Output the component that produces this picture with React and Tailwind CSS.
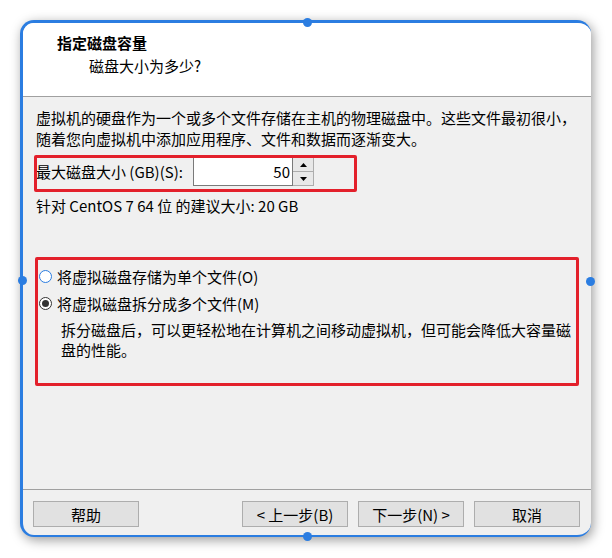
import React from 'react';

const font = { fontFamily: '"Noto Sans CJK SC", "Noto Sans", sans-serif' };

function Handle({ className }) {
  return <div className={`absolute w-[9px] h-[9px] rounded-full bg-[#2b7de1] ${className}`} />;
}

function WinButton({ children }) {
  return (
    <button className="w-[106px] h-[26px] bg-[#e1e1e1] border border-[#adadad] text-[15px] leading-none text-black flex items-center justify-center">
      {children}
    </button>
  );
}

function Radio({ checked, hover }) {
  return (
    <span
      className={`ml-[3px] w-[13px] h-[13px] rounded-full bg-white border flex items-center justify-center shrink-0 ${
        hover ? 'border-[#2b7de1]' : 'border-[#333333]'
      }`}
    >
      {checked && <span className="w-[7px] h-[7px] rounded-full bg-[#333333]" />}
    </span>
  );
}

export default function App() {
  return (
    <div className="w-[612px] h-[558px] bg-white pt-[20px] pl-[20px] text-black" style={font}>
      <div className="relative w-[571px] h-[517px]">
        <div className="w-full h-full flex flex-col rounded-[14px] overflow-hidden border-t-[3px] border-l-[3px] border-b-[2px] border-r-0 border-t-[#2b7de1] border-l-[#2b7de1] border-b-[#2b7de1] bg-[#f0f0f0] shadow-[2px_3px_12px_rgba(0,0,0,0.4)]">
          {/* header */}
          <div className="h-[74px] shrink-0 bg-white border-b border-[#a0a0a0] pt-[9px]">
            <div className="pl-[34px] text-[15px] leading-[21px] font-bold">指定磁盘容量</div>
            <div className="pl-[66px] mt-[2px] text-[15px] leading-[21px]">磁盘大小为多少?</div>
          </div>

          {/* body */}
          <div className="flex-1 pl-[13px] pt-[10px] text-[15px]">
            <p className="leading-[21px]">
              虚拟机的硬盘作为一个或多个文件存储在主机的物理磁盘中。这些文件最初很小，
              <br />
              随着您向虚拟机中添加应用程序、文件和数据而逐渐变大。
            </p>

            <div className="relative mt-[8px] flex items-center h-[29px]">
              <span className="w-[157px] shrink-0 leading-[21px]">最大磁盘大小 (GB)(S):</span>
              <div className="flex h-[29px]">
                <div className="w-[100px] h-full bg-white border border-[#7a7a7a] flex items-center justify-end pr-[2px] leading-none">
                  50
                </div>
                <div className="w-[21px] h-full flex flex-col">
                  <div className="flex-1 bg-[#e8e8e8] border border-[#adadad] border-l-0 flex items-center justify-center">
                    <svg width="7" height="4" viewBox="0 0 7 4"><path d="M0 4 L3.5 0 L7 4 Z" fill="#000" /></svg>
                  </div>
                  <div className="flex-1 bg-[#e8e8e8] border border-[#adadad] border-l-0 border-t-0 flex items-center justify-center">
                    <svg width="7" height="4" viewBox="0 0 7 4"><path d="M0 0 L3.5 4 L7 0 Z" fill="#000" /></svg>
                  </div>
                </div>
              </div>
              <div className="absolute left-[-2px] top-[-2px] w-[323px] h-[37px] border-[3px] border-[#e3202b] rounded-[2px] pointer-events-none" />
            </div>

            <div className="mt-[9px] leading-[21px]">针对 CentOS 7 64 位 的建议大小: 20 GB</div>

            <div className="relative mt-[50px]">
              <div className="flex items-center gap-[5px] h-[21px]">
                <Radio hover />
                <span className="leading-[21px]">将虚拟磁盘存储为单个文件(O)</span>
              </div>
              <div className="flex items-center gap-[5px] h-[21px] mt-[6px]">
                <Radio checked />
                <span className="leading-[21px]">将虚拟磁盘拆分成多个文件(M)</span>
              </div>
              <p className="pl-[25px] mt-[6px] leading-[20px]">
                拆分磁盘后，可以更轻松地在计算机之间移动虚拟机，但可能会降低大容量磁
                <br />
                盘的性能。
              </p>
              <div className="absolute left-[-1px] top-[-9px] w-[544px] h-[129px] border-[3px] border-[#e3202b] rounded-[2px] pointer-events-none" />
            </div>
          </div>

          {/* footer */}
          <div className="shrink-0 border-t border-[#a0a0a0] pt-[11px] pb-[8px] pl-[10px] pr-[11px] flex items-center">
            <WinButton>帮助</WinButton>
            <div className="ml-auto flex gap-[10px]">
              <WinButton>&lt; 上一步(B)</WinButton>
              <WinButton>下一步(N) &gt;</WinButton>
              <WinButton>取消</WinButton>
            </div>
          </div>
        </div>

        <Handle className="left-[283px] top-[-2px]" />
        <Handle className="left-[-2px] top-[256px]" />
        <Handle className="left-[566px] top-[257px]" />
        <Handle className="left-[283px] top-[512px]" />
      </div>
    </div>
  );
}
